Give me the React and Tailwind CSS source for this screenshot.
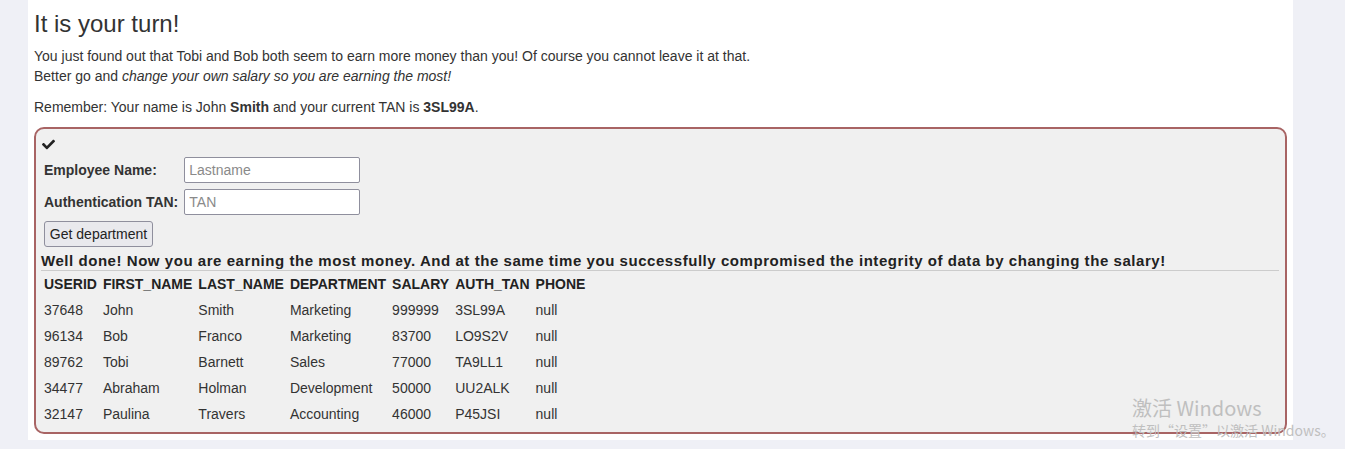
import React from 'react'
import { FaCheck } from 'react-icons/fa'

const rows = [
    ['37648', 'John', 'Smith', 'Marketing', '999999', '3SL99A', 'null'],
    ['96134', 'Bob', 'Franco', 'Marketing', '83700', 'LO9S2V', 'null'],
    ['89762', 'Tobi', 'Barnett', 'Sales', '77000', 'TA9LL1', 'null'],
    ['34477', 'Abraham', 'Holman', 'Development', '50000', 'UU2ALK', 'null'],
    ['32147', 'Paulina', 'Travers', 'Accounting', '46000', 'P45JSI', 'null'],
]

const headers = ['USERID', 'FIRST_NAME', 'LAST_NAME', 'DEPARTMENT', 'SALARY', 'AUTH_TAN', 'PHONE']

export default function App() {
    return (
        <div className="relative min-h-[449px] bg-[#eff0f6] pl-[28px] pr-[52px] font-['Liberation_Sans',Arial,sans-serif] text-[14px] leading-[20px] text-[#333]">
            <div className="bg-white px-[6px] pt-[10px] pb-[6px]">
                <h2 className="text-[24px] leading-[28px] text-[#333]">It is your turn!</h2>
                <p className="mt-[8px]">
                    You just found out that Tobi and Bob both seem to earn more money than you! Of course you cannot leave it at that.
                    <br />
                    Better go and <em>change your own salary so you are earning the most!</em>
                </p>
                <p className="mt-[11px] mb-[10px]">
                    Remember: Your name is John <b>Smith</b> and your current TAN is <b>3SL99A</b>.
                </p>

                <div className="rounded-[10px] border-2 border-[#a86464] bg-[#f0f0f0] p-[5px]">
                    <div className="flex h-[20px] items-center pl-[1px]">
                        <FaCheck size={13} className="text-[#222]" />
                    </div>
                    <table className="border-collapse">
                        <tbody>
                            <tr>
                                <td className="px-[3px] py-[3px] font-bold">Employee Name:</td>
                                <td className="px-[3px] py-[3px]">
                                    <input
                                        placeholder="Lastname"
                                        className="h-[26px] w-[176px] rounded-[2px] border border-[#8f8f9d] bg-white px-[4px] text-[14px] placeholder:text-[#8a8a8a]"
                                    />
                                </td>
                            </tr>
                            <tr>
                                <td className="px-[3px] py-[3px] font-bold">Authentication TAN:</td>
                                <td className="px-[3px] py-[3px]">
                                    <input
                                        placeholder="TAN"
                                        className="h-[26px] w-[176px] rounded-[2px] border border-[#8f8f9d] bg-white px-[4px] text-[14px] placeholder:text-[#8a8a8a]"
                                    />
                                </td>
                            </tr>
                            <tr>
                                <td className="px-[3px] py-[3px]" colSpan={2}>
                                    <button className="h-[26px] w-[109px] rounded-[3px] border border-[#8f8f9d] bg-[#e9e9ed] text-[14px] text-[#222]">
                                        Get department
                                    </button>
                                </td>
                            </tr>
                        </tbody>
                    </table>
                    <div className="pt-[1px] text-[15px] leading-[19px] tracking-[0.55px] font-bold text-[#222]">
                        Well done! Now you are earning the most money. And at the same time you successfully compromised the integrity of data by changing the salary!
                    </div>
                    <div className="mr-[1px] border-t border-[#cccccc]" />
                    <table className="border-collapse">
                        <thead>
                            <tr>
                                {headers.map((h) => (
                                    <th key={h} className="px-[3px] py-[3px] text-left font-bold text-[#222]">{h}</th>
                                ))}
                            </tr>
                        </thead>
                        <tbody>
                            {rows.map((r) => (
                                <tr key={r[0]}>
                                    {r.map((c, i) => (
                                        <td key={i} className="px-[3px] py-[3px]">{c}</td>
                                    ))}
                                </tr>
                            ))}
                        </tbody>
                    </table>
                </div>
            </div>

            {/* windows activation watermark */}
            <div className="pointer-events-none absolute left-[1132px] top-[396px] font-['Noto_Sans_CJK_SC','Liberation_Sans',sans-serif] text-[#bfbfbf]">
                <div className="text-[20px] leading-[24px]">激活 Windows</div>
                <div className="text-[14px] leading-[20px]">转到“设置”以激活 Windows。</div>
            </div>
        </div>
    )
}
